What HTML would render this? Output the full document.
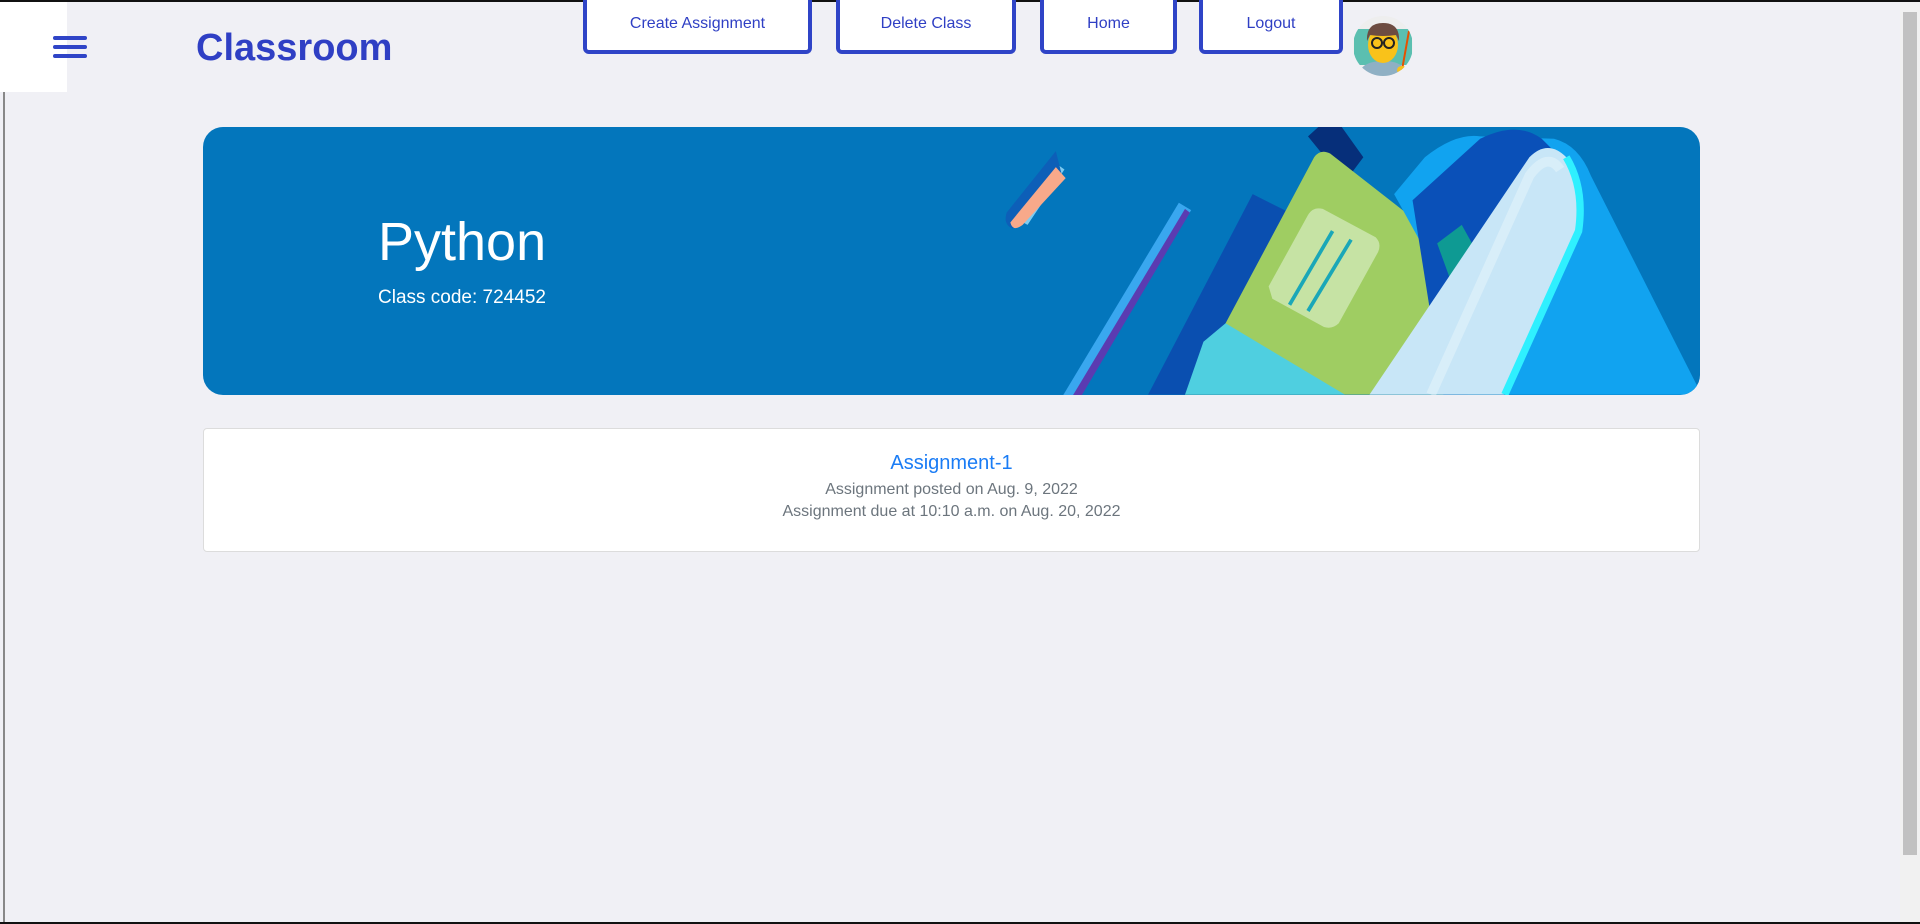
<!DOCTYPE html>
<html><head><meta charset="utf-8"><style>
html,body{margin:0;padding:0;}
body{width:1920px;height:924px;background:#f0f0f5;position:relative;overflow:hidden;font-family:"Liberation Sans",sans-serif;}
.abs{position:absolute;}
.btn{position:absolute;top:-4px;height:54px;border:4px solid #2f44c7;border-top:none;border-radius:0 0 6px 6px;background:#fff;color:#2f3fc4;font-size:16px;text-align:center;line-height:55px;box-sizing:content-box;}
</style></head><body>
<div class="abs" style="left:0;top:0;width:1920px;height:2px;background:#111"></div>
<div class="abs" style="left:0;top:922px;width:1920px;height:2px;background:#111"></div>
<div class="abs" style="left:3px;top:92px;width:2px;height:830px;background:#888"></div>
<div class="abs" style="left:0;top:2px;width:67px;height:90px;background:#fff"></div>
<div class="abs" style="left:53px;top:36px;width:34px;height:4px;background:#2f44c7;border-radius:2px"></div>
<div class="abs" style="left:53px;top:45px;width:34px;height:4px;background:#2f44c7;border-radius:2px"></div>
<div class="abs" style="left:53px;top:54px;width:34px;height:4px;background:#2f44c7;border-radius:2px"></div>
<div class="abs" style="left:196px;top:27px;font-size:38px;font-weight:bold;color:#2f3fc4">Classroom</div>
<div class="btn" style="left:583px;width:221px">Create Assignment</div>
<div class="btn" style="left:836px;width:172px">Delete Class</div>
<div class="btn" style="left:1040px;width:129px">Home</div>
<div class="btn" style="left:1199px;width:136px">Logout</div>
<svg class="abs" style="left:1352px;top:15px" width="62" height="62" viewBox="0 0 62 62">
<defs><clipPath id="c"><circle cx="31" cy="31" r="30"/></clipPath></defs>
<g clip-path="url(#c)">
<rect width="62" height="62" fill="#eee"/>
<rect x="2" y="14" width="58" height="36" fill="#5bbfb0"/>
<path d="M6 62 Q8 46 31 46 Q54 46 56 62Z" fill="#8fb0c4"/>
<ellipse cx="31" cy="30" rx="15" ry="18" fill="#f9c21a"/>
<path d="M15 26 Q14 8 31 8 Q48 8 47 26 L44 20 Q31 22 18 20Z" fill="#6d4c41"/>
<circle cx="25" cy="28" r="5" fill="none" stroke="#222" stroke-width="2"/>
<circle cx="37" cy="28" r="5" fill="none" stroke="#222" stroke-width="2"/>
<line x1="57" y1="16" x2="50" y2="55" stroke="#e65100" stroke-width="2"/>
<ellipse cx="50" cy="55" rx="5" ry="4" fill="#f9c21a"/>
</g></svg>
<div class="abs" style="left:1900px;top:2px;width:20px;height:920px;background:#f1f1f1"></div>
<div class="abs" style="left:1903px;top:12px;width:14px;height:843px;background:#c1c1c1"></div>
<div class="abs" style="left:203px;top:127px;width:1497px;height:268px;background:#0376bc;border-radius:20px;overflow:hidden">
<div class="abs" style="left:175px;top:84px;font-size:54px;color:#fff;font-weight:300">Python</div>
<div class="abs" style="left:175px;top:160px;font-size:19px;color:#fff">Class code: 724452</div>
<svg class="abs" style="left:780px;top:0" width="717" height="268" viewBox="0 0 717 268">
<g transform="translate(-44,-62) scale(1.23)">
<path d="M63 125 L95 80 L102 85 L72 130 Z" fill="#7ecbf0"/>
<path d="M55 120 Q52 130 60 133 L100 90 L95 70 Z" fill="#0d5fb8"/>
<path d="M58 128 Q60 136 68 130 L103 92 L95 83 Z" fill="#f8a98a"/>
<path d="M100 270 L195 112 L205 118 L112 272Z" fill="#39a7ef"/>
<path d="M108 270 L200 117 L204 120 L114 272Z" fill="#5b3bb1"/>
<path d="M170 268 L255 105 L285 120 L370 240 L330 268Z" fill="#0a4fb0"/>
<path d="M320 40 L345 75 L330 95 L300 58Z" fill="#062f7a"/>
<path d="M233 210 L305 75 Q310 68 318 72 L450 175 L410 268 L200 268Z" fill="#9fcd62"/>
<path d="M215 225 L233 210 L330 268 L200 268Z" fill="#4fcfe0"/>
<path d="M268 180 L300 122 Q304 115 312 117 L355 140 Q360 145 357 152 L325 210 Q320 215 313 213 L271 190Z" fill="#c6e3a4"/>
<path d="M285 195 L320 135 M300 200 L335 142" stroke="#1aa7b8" stroke-width="3"/>
<path d="M370 105 L395 75 Q420 55 440 58 L500 60 Q520 65 530 90 L620 268 L460 268Z" fill="#11a3f0"/>
<path d="M385 110 L440 60 Q470 45 490 60 L510 80 L430 268 L410 268Z" fill="#0a50b8"/>
<path d="M405 145 L425 130 L450 175 L425 200Z" fill="#0e9a93"/>
<path d="M350 268 L480 75 Q495 60 510 75 Q525 100 520 135 L460 268Z" fill="#c8e6f7"/>
<path d="M460 268 L520 135 Q525 100 510 75" fill="none" stroke="#2ff0ff" stroke-width="6"/>
<path d="M400 268 L480 90 Q495 70 505 85" fill="none" stroke="#e8f5fb" stroke-width="8" opacity=".5"/>
</g>
</svg>
</div>
<div class="abs" style="left:203px;top:428px;width:1495px;height:122px;background:#fff;border:1px solid #dcdcdc;border-radius:4px;text-align:center">
<div style="margin-top:23px;font-size:20px;color:#1a7cf5">Assignment-1</div>
<div style="margin-top:4px;font-size:16px;color:#6c757d;line-height:22px">Assignment posted on Aug. 9, 2022<br>Assignment due at 10:10 a.m. on Aug. 20, 2022</div>
</div>
</body></html>
